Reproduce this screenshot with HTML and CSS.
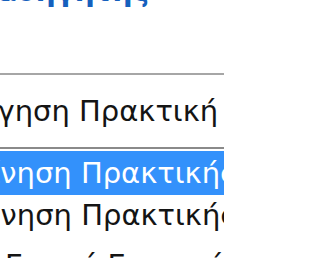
FILE: index.html
```html
<!DOCTYPE html>
<html lang="el">
<head>
<meta charset="utf-8">
<link rel="stylesheet" href="styles.css">
</head>
<body>
<div class="page">
  <div class="title-row">
    <h2 class="title">Επιβλέπων Καθηγητής</h2>
  </div>
  <div class="select"><span class="txt ind-a">Αξιολόγηση Πρακτική Άσκηση</span></div>
  <ul class="list">
    <li class="opt active"><span class="txt ind-b">Εκκίνηση Πρακτικής Άσκησης</span></li>
    <li class="opt"><span class="txt ind-c">Εκπόνηση Πρακτικής Άσκησης</span></li>
    <li class="opt"><span class="txt ind-d">Γενική Εποπτεία Σπουδαστή</span></li>
  </ul>
</div>
</body>
</html>
```
FILE: styles.css
```css
html, body {
  margin: 0;
  padding: 0;
  background: #ffffff;
  overflow: hidden;
}
.page {
  width: 224px;
  height: 258px;
  overflow: hidden;
  font-family: "DejaVu Sans", sans-serif;
}
.title-row {
  display: flex;
  justify-content: flex-end;
  width: 149px;
  height: 40px;
  margin-top: -28px;
}
.title {
  flex: none;
  margin: 0;
  font-size: 28px;
  line-height: 40px;
  font-weight: bold;
  color: #1560bd;
  white-space: nowrap;
}
.select {
  margin-top: 61px;
  border-top: 2px solid #a6a6a6;
  border-bottom: 2px solid #8a8a8a;
  height: 72px;
  font-size: 29px;
  line-height: 72px;
  color: #141414;
  white-space: nowrap;
}
.list {
  list-style: none;
  margin: 2px 0 0 0;
  padding: 0;
}
.opt {
  height: 50px;
  line-height: 40px;
  font-size: 29px;
  color: #141414;
  white-space: nowrap;
}
.opt.active {
  height: 44px;
  line-height: 44px;
  background: #3391fb;
  color: #ffffff;
}
.txt {
  display: block;
}
.ind-a {
  margin-left: -101px;
}
.ind-b {
  margin-left: -62px;
}
.ind-c {
  margin-left: -70px;
}
.ind-d {
  margin-left: 5px;
}
```
